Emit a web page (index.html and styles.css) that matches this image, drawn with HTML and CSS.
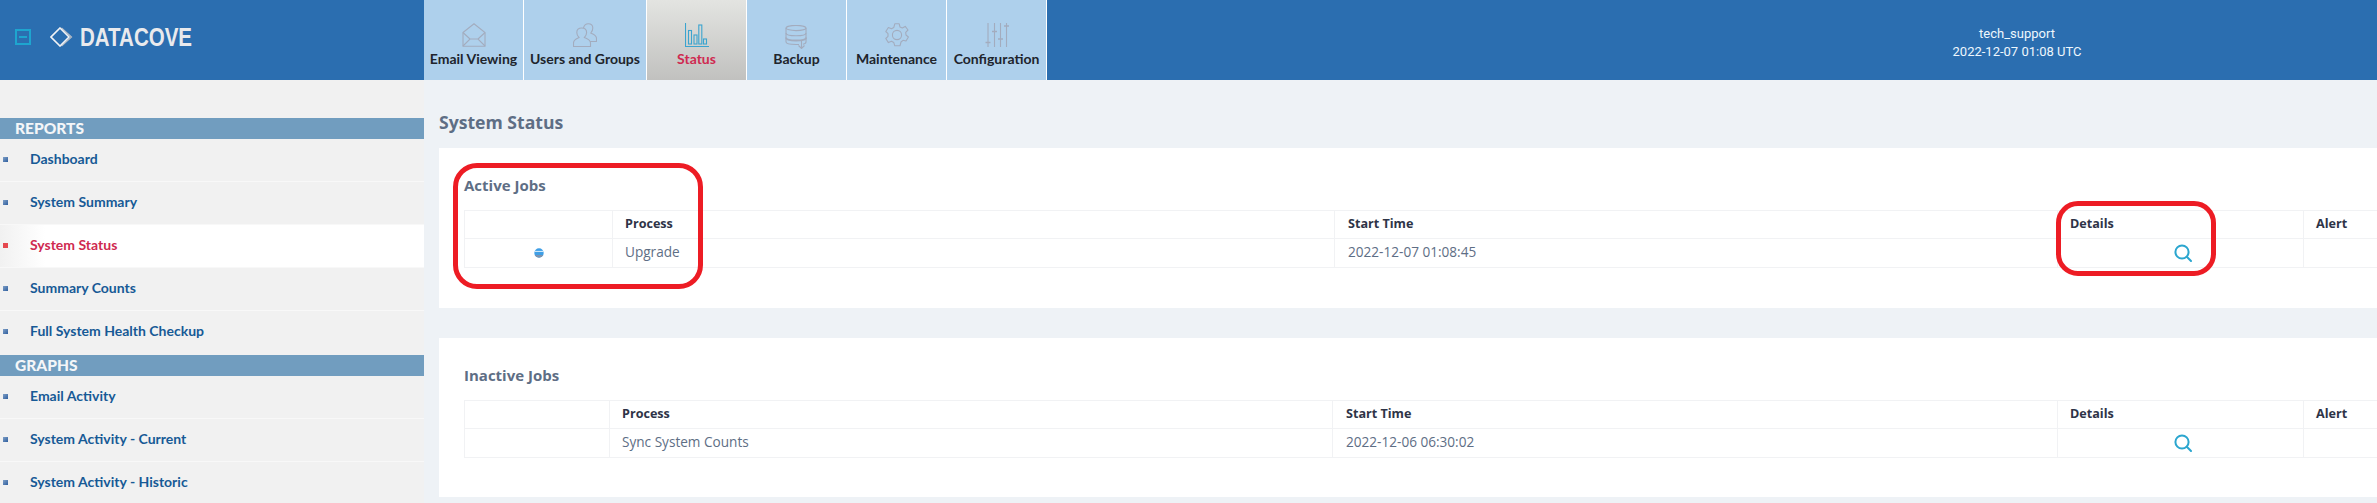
FILE: index.html
```html
<!DOCTYPE html>
<html lang="en">
<head>
<meta charset="utf-8">
<title>System Status</title>
<link rel="stylesheet" href="styles.css">
</head>
<body>
<div class="page">
  <header class="topbar">
    <div class="brand">
      <span class="toggle"><span class="toggle-bar"></span></span>
      <svg class="diamond" viewBox="0 0 24 20" width="24" height="20"><path d="M11.5 1 L21.5 10 L11.5 19" fill="none" stroke="#b9bdc4" stroke-width="1.2"/><path d="M10 1 L19 10 L10 19 L1 10 Z" fill="none" stroke="#f2f3f5" stroke-width="1.6"/></svg>
      <span class="brand-name">DATACOVE</span>
    </div>
    <nav class="tabs">
      <a class="tab tab-w100">
        <svg class="tab-icon" viewBox="0 0 24 24" fill="none" stroke="#a3acbe" stroke-width="1.1"><path d="M1 9.5 L12 .8 L23 9.5 V23.3 H1 Z"/><path d="M1 9.5 L8 16 M23 9.5 L16 16 M1 23 L8 16 H16 L23 23"/></svg>
        <span>Email Viewing</span>
      </a>
      <a class="tab tab-w123">
        <svg class="tab-icon" viewBox="0 0 24 24" fill="none" stroke="#a3acbe" stroke-width="1.1"><path d="M.5 23.5 V20 C.5 16.5 4 15.5 6 14.5 C4.5 13 3.8 11.5 3.8 9.5 C3.8 6.8 5.7 5 8.7 5 C11.7 5 13.6 6.8 13.6 9.5 C13.6 11.5 12.9 13 11.4 14.5 C13.4 15.5 17.5 16.5 17.5 20 V23.5 Z"/><path d="M10.5 5 C11 2.3 12.8.7 15.3.7 C18 .7 19.8 2.5 19.8 5 C19.8 7 19 8.7 17.8 10 C19.8 11 23.5 12 23.5 15.5 V18.5 H17"/></svg>
        <span>Users and Groups</span>
      </a>
      <a class="tab tab-w100 tab-active">
        <svg class="tab-icon" viewBox="0 0 24 24" fill="none" stroke="#3ba4cf" stroke-width="1.1"><path d="M.5 0 V23.5 H24"/><rect x="3.5" y="7.5" width="3" height="13.5"/><rect x="9" y="12" width="3" height="9"/><rect x="13.8" y="2" width="3" height="19"/><rect x="18.5" y="16" width="3" height="5"/></svg>
        <span>Status</span>
      </a>
      <a class="tab tab-w99">
        <svg class="tab-icon tab-icon-low" viewBox="0 0 24 24" fill="none" stroke="#a3acbe" stroke-width="1.1"><ellipse cx="11" cy="3" rx="10" ry="2.6"/><path d="M1 3 V17 C1 18.5 4 19.5 11 19.5 H14 M21 3 V17 C21 18.2 20 18.8 18 19.2"/><path d="M1 8 C1 10 5 10.8 11 10.8 C17 10.8 21 10 21 8"/><path d="M1 12.5 C1 15 5 15.5 11 15.5 C17 15.5 21 15 21 12.5" stroke-width="1.8"/><path d="M16.5 15 V23.5 M13.5 20.5 L16.5 23.5 L19.5 20.5"/></svg>
        <span>Backup</span>
      </a>
      <a class="tab tab-w99">
        <svg class="tab-icon" viewBox="0 0 24 24" fill="none" stroke="#a3acbe" stroke-width="1.1"><path d="M9.8 .8 H14.2 L15 4 L17.3 5 L20.2 3.4 L23 7 L20.7 9.3 L21 12 L23.4 14 L21 18 L18 17.3 L16 19 L15 22.8 H9.8 L8.8 19.6 L6.5 18.3 L3.4 19.6 L.8 15.5 L3 13.3 V10.7 L.8 8.5 L3.4 4.5 L6.5 5.7 L8.8 4.4 Z" stroke-linejoin="round"/><circle cx="12" cy="12" r="4.6"/></svg>
        <span>Maintenance</span>
      </a>
      <a class="tab tab-w100">
        <svg class="tab-icon" viewBox="0 0 24 24" fill="none" stroke="#a3acbe" stroke-width="1.1"><path d="M3 0 V24 M9.5 0 V24 M15.5 0 V24 M21.5 0 V24"/><path d="M.5 19.5 H5.5 M7 8.5 H12 M13 16 H18 M19 3 H24" stroke-width="1.6"/></svg>
        <span>Configuration</span>
      </a>
    </nav>
    <div class="account">
      <div>tech_support</div>
      <div>2022-12-07 01:08 UTC</div>
    </div>
  </header>
  <div class="body-row">
    <aside class="sidebar">
      <h3 class="side-head">REPORTS</h3>
      <a class="side-item">Dashboard</a>
      <a class="side-item">System Summary</a>
      <a class="side-item side-current">System Status</a>
      <a class="side-item">Summary Counts</a>
      <a class="side-item side-last">Full System Health Checkup</a>
      <h3 class="side-head">GRAPHS</h3>
      <a class="side-item">Email Activity</a>
      <a class="side-item">System Activity - Current</a>
      <a class="side-item">System Activity - Historic</a>
    </aside>
    <main class="content">
      <h1 class="page-title">System Status</h1>
      <section class="card card-active">
        <h2 class="card-title">Active Jobs</h2>
        <table class="jobs">
          <colgroup><col class="c-a1"><col class="c-a2"><col class="c-a3"><col class="c-4"><col class="c-5"></colgroup>
          <thead><tr><th></th><th>Process</th><th class="col-time">Start Time</th><th>Details</th><th>Alert</th></tr></thead>
          <tbody><tr>
            <td class="cell-icon"><svg class="status-dot" viewBox="0 0 10 10" width="10" height="10"><circle cx="5" cy="5" r="4.7" fill="#3f9fe6"/><path d="M.5 3.4 H9.5" stroke="#dff0fb" stroke-width="1"/><path d="M.8 7 A4.7 4.7 0 0 0 9.2 7 Z" fill="#7f93ad"/></svg></td>
            <td>Upgrade</td>
            <td class="col-time">2022-12-07 01:08:45</td>
            <td class="cell-icon"><svg class="search" viewBox="0 0 18 18" width="18" height="18" fill="none" stroke="#2ba6cf" stroke-width="2"><circle cx="8" cy="8" r="6.6"/><path d="M12.8 12.8 L17 17" stroke-linecap="round"/></svg></td>
            <td></td>
          </tr></tbody>
        </table>
      </section>
      <section class="card card-inactive">
        <h2 class="card-title">Inactive Jobs</h2>
        <table class="jobs">
          <colgroup><col class="c-b1"><col class="c-b2"><col class="c-b3"><col class="c-4"><col class="c-5"></colgroup>
          <thead><tr><th></th><th>Process</th><th class="col-time">Start Time</th><th>Details</th><th>Alert</th></tr></thead>
          <tbody><tr>
            <td></td>
            <td>Sync System Counts</td>
            <td class="col-time">2022-12-06 06:30:02</td>
            <td class="cell-icon"><svg class="search" viewBox="0 0 18 18" width="18" height="18" fill="none" stroke="#2ba6cf" stroke-width="2"><circle cx="8" cy="8" r="6.6"/><path d="M12.8 12.8 L17 17" stroke-linecap="round"/></svg></td>
            <td></td>
          </tr></tbody>
        </table>
      </section>
    </main>
  </div>
  <div class="mark mark-left"></div>
  <div class="mark mark-right"></div>
</div>
</body>
</html>
```
FILE: styles.css
```css
* { box-sizing: border-box; }
html, body { margin: 0; height: 100%; }
body { overflow: hidden; background: #eef2f6; font-family: "Open Sans", sans-serif; }
.page { position: relative; width: 2377px; height: 503px; overflow: hidden; }

.topbar { display: flex; height: 80px; background: #2b6eb0; }
.brand { display: flex; align-items: center; width: 424px; padding: 0 0 6px 15px; flex: none; }
.toggle { display: flex; align-items: center; justify-content: center; width: 16px; height: 16px; border: 2px solid #1ea5cf; }
.toggle-bar { width: 8px; height: 2px; background: #1ea5cf; }
.diamond { margin-left: 19px; }
.brand-name { margin-left: 6px; font: 700 25px/1 "Liberation Sans", sans-serif; color: #e9eaed; transform: scaleX(.82); transform-origin: left center; }

.tabs { display: flex; flex: none; }
.tab { display: flex; flex-direction: column; align-items: center; padding-top: 23px; border-right: 1px solid #fff; background: #aed0ec; color: #20242c; font: 700 14px/18px "Lato", sans-serif; white-space: nowrap; }
.tab span { margin-top: 3px; }
.tab-w100 { width: 100px; }
.tab-w123 { width: 123px; }
.tab-w99 { width: 100px; }
.tab-active { background: linear-gradient(#e3e4e1, #c1c1bf); color: #cf2a50; }
.tab-icon { width: 24px; height: 24px; display: block; }
.tab-icon-low { transform: translateY(2px); }

.account { flex: 1; padding: 25px 260px 0 0; display: flex; flex-direction: column; align-items: flex-end; }
.account div { width: 200px; text-align: center; color: #eef7fd; font: 400 13px/18px "Roboto", sans-serif; }

.body-row { display: flex; height: 423px; }
.sidebar { width: 424px; flex: none; padding-top: 38px; background: #f1f1f1; }
.side-head { margin: 0; height: 21px; padding-left: 15px; background: #719dbf; color: #f4f6f8; font: 900 15.5px/21px "Lato", sans-serif; }
.side-item + .side-head { margin-top: 1px; }
.side-item { position: relative; display: block; height: 43px; padding-left: 30px; border-bottom: 1px solid #f8f8f8; color: #175a96; font: 700 14px/40px "Lato", sans-serif; }
.side-item::before { content: ""; position: absolute; left: 3px; top: 18px; width: 5px; height: 5px; background: linear-gradient(135deg, #7f9fc6, #2f5f9f); }
.side-last { border-bottom: 0; }
.side-current { background: linear-gradient(90deg, #f1f1f1, #fff 45px); color: #cf2a50; }
.side-current::before { background: #e5484f; }

.content { flex: 1; min-width: 0; padding-left: 15px; background: #eef2f6; }
.page-title { margin: 0; height: 68px; padding-top: 30px; color: #5e6e85; font: 700 17.6px/24px "Open Sans", sans-serif; }
.card { background: #fff; padding-left: 25px; overflow: hidden; }
.card-active { height: 160px; margin-bottom: 30px; padding-top: 27px; }
.card-inactive { height: 159px; padding-top: 27px; }
.card-title { margin: 0; height: 35px; color: #5e6e85; font: 700 15px/20px "Open Sans", sans-serif; }
.jobs { width: 1950px; table-layout: fixed; border-collapse: collapse; }
.jobs th, .jobs td { border: 1px solid #f1f2f4; padding: 0 0 2px 12px; text-align: left; height: 28px; }
.jobs th { color: #2e3447; font: 700 12.6px/18px "Open Sans", sans-serif; }
.jobs td { height: 29px; color: #5e6e85; font: 400 13.6px/18px "Open Sans", sans-serif; }
.jobs .col-time { padding-left: 13px; }
.jobs .cell-icon { padding: 0; text-align: center; }
.cell-icon svg { display: block; margin: 0 auto; }
.search { transform: translateX(2px); }
.c-a1 { width: 148px; } .c-a2 { width: 722px; } .c-a3 { width: 723px; }
.c-b1 { width: 145px; } .c-b2 { width: 723px; } .c-b3 { width: 725px; }
.c-4 { width: 246px; } .c-5 { width: 111px; }

.mark { position: absolute; border: 5px solid #ed1c24; pointer-events: none; }
.mark-left { left: 453px; top: 163px; width: 250px; height: 126px; border-radius: 24px; }
.mark-right { left: 2056px; top: 201px; width: 160px; height: 75px; border-radius: 22px; }
```
